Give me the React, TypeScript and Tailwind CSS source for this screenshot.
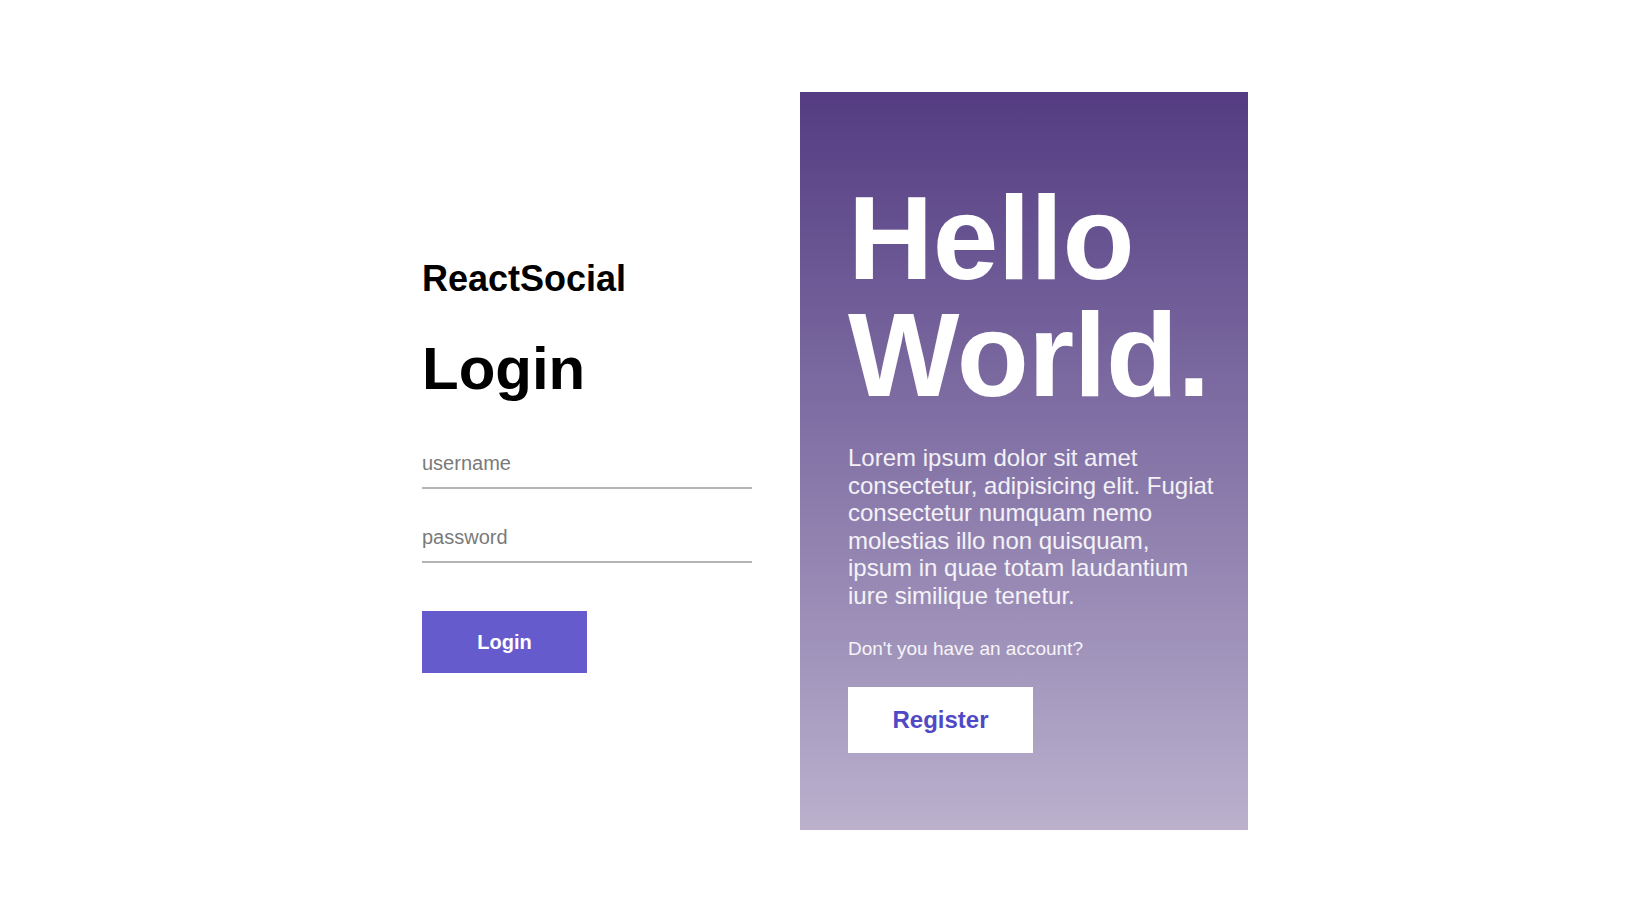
export default function App() {
  return (
    <div className="min-h-[924px] bg-white font-['Liberation_Sans',Arial,sans-serif]">
      <div className="mx-auto flex w-[856px] pt-[92px]">
        {/* Login form */}
        <div className="ml-[30px] mr-[48px] w-[330px] pt-[166px]">
          <h3 className="text-[36px] font-bold leading-[41.4px] text-black">ReactSocial</h3>
          <h1 className="mt-[40px] text-[60px] font-bold leading-[60px] text-black">Login</h1>
          <form className="mt-[40px] flex flex-col">
            <input
              type="text"
              placeholder="username"
              className="h-[50px] w-full border-b-2 border-[#b4b4b4] bg-transparent text-[20px] text-[#333] outline-none placeholder:text-[#7a7a7a]"
            />
            <input
              type="password"
              placeholder="password"
              className="mt-[24px] h-[50px] w-full border-b-2 border-[#b4b4b4] bg-transparent text-[20px] text-[#333] outline-none placeholder:text-[#7a7a7a]"
            />
            <button
              type="button"
              className="mt-[48px] h-[62px] w-[165px] bg-[#665bcd] text-[20px] font-bold text-white"
            >
              Login
            </button>
          </form>
        </div>

        {/* Hello panel */}
        <div className="h-[738px] w-[448px] bg-linear-to-b from-[#553c82] to-[#bbb1cd] pl-12 pr-8 pt-[88px]">
          <h1 className="text-[118px] font-bold leading-[117px] tracking-[-0.5px] text-white">
            Hello
            <br />
            World.
          </h1>
          <p className="mt-[30px] text-[24px] leading-[27.6px] text-white/90">
            Lorem ipsum dolor sit amet consectetur, adipisicing elit. Fugiat consectetur numquam nemo molestias illo
            non quisquam, ipsum in quae totam laudantium iure similique tenetur.
          </p>
          <span className="mt-[28px] block text-[19px] leading-[21.8px] text-white/90">
            Don't you have an account?
          </span>
          <button type="button" className="mt-[28px] h-[66px] w-[185px] bg-white text-[24px] font-bold text-[#5148c6]">
            Register
          </button>
        </div>
      </div>
    </div>
  );
}
